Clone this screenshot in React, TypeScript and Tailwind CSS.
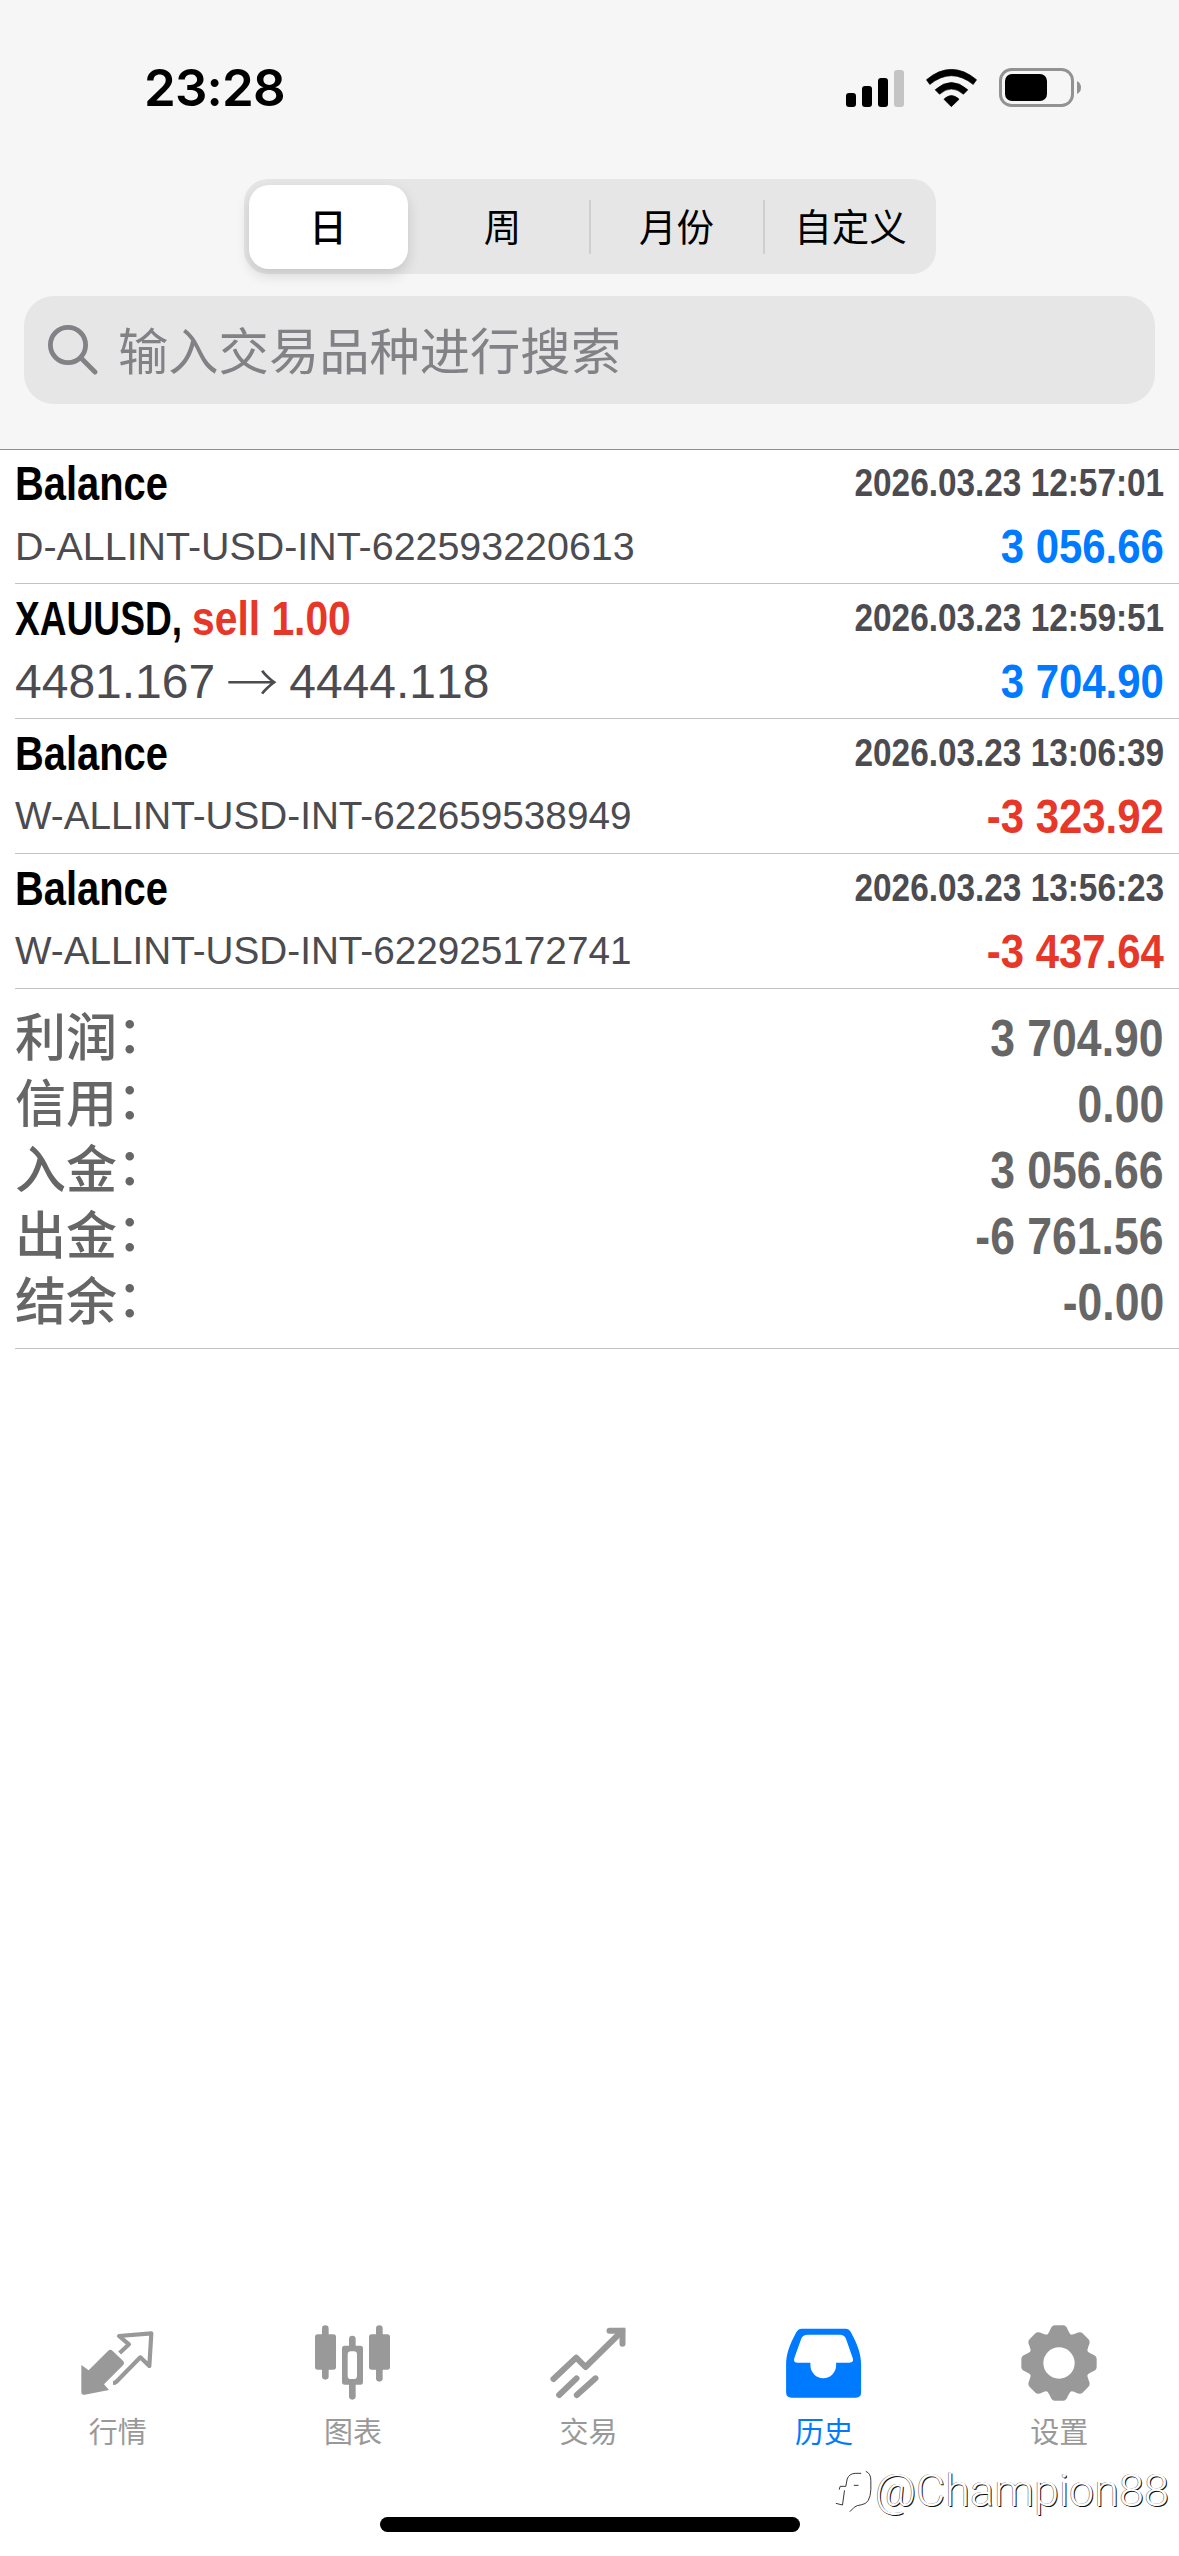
import { useState } from "react";

const BLUE = "text-[#007aff]";
const RED = "text-[#e73728]";

const PERIODS = ["日", "周", "月份", "自定义"];

interface Deal {
  title: string;
  side?: string;
  time: string;
  note?: string;
  noteSize?: string;
  prices?: [string, string];
  amount: string;
}

const DEALS: Deal[] = [
  {
    title: "Balance",
    time: "2026.03.23 12:57:01",
    note: "D-ALLINT-USD-INT-622593220613",
    noteSize: "text-[39.4px]",
    amount: "3 056.66",
  },
  {
    title: "XAUUSD,",
    side: "sell 1.00",
    time: "2026.03.23 12:59:51",
    prices: ["4481.167", "4444.118"],
    amount: "3 704.90",
  },
  {
    title: "Balance",
    time: "2026.03.23 13:06:39",
    note: "W-ALLINT-USD-INT-622659538949",
    noteSize: "text-[38.7px]",
    amount: "-3 323.92",
  },
  {
    title: "Balance",
    time: "2026.03.23 13:56:23",
    note: "W-ALLINT-USD-INT-622925172741",
    noteSize: "text-[38.7px]",
    amount: "-3 437.64",
  },
];

const SUMMARY = [
  { label: "利润", value: "3 704.90" },
  { label: "信用", value: "0.00" },
  { label: "入金", value: "3 056.66" },
  { label: "出金", value: "-6 761.56" },
  { label: "结余", value: "-0.00" },
];

const StatusBar = () => (
  <div className="flex h-[179px] items-start justify-between pl-[144px] pr-[98px] pt-[57px]">
    <span className="font-['Inter'] text-[51px] font-semibold leading-[62px] tracking-[-0.8px] text-black">23:28</span>
    <div className="flex items-center gap-[22px] pt-[11px]">
      <svg className="h-[38px] w-[58px]" viewBox="0 0 58 38">
        <rect x="0" y="24" width="10" height="14" rx="3" />
        <rect x="16" y="17" width="10" height="21" rx="3" />
        <rect x="32" y="9" width="10" height="29" rx="3" />
        <rect x="48" y="1" width="10" height="37" rx="3" fill="#c4c4c4" />
      </svg>
      <svg className="h-[38px] w-[51px]" viewBox="319 56 151 113">
        <path d="M320 88Q394 26 469 88L459 102Q394 50 330 102Z" stroke="#000" strokeWidth="2" strokeLinejoin="round" />
        <path d="M346 118Q394 74 443 118L430 131Q394 100 359 131Z" stroke="#000" strokeWidth="2" strokeLinejoin="round" />
        <path d="M372 146Q394 124 417 146L394 168Z" stroke="#000" strokeWidth="2" strokeLinejoin="round" />
      </svg>
      <svg className="h-[39px] w-[82px]" viewBox="0 0 82 39">
        <rect x="1.5" y="1.5" width="72" height="36" rx="11" fill="none" stroke="#929292" strokeWidth="3" />
        <rect x="6" y="6" width="42" height="27" rx="7" />
        <path d="M78 13q4 2 4 6.500t-4 6.500z" fill="#929292" />
      </svg>
    </div>
  </div>
);

const Header = () => {
  const [active, setActive] = useState(0);

  return (
    <header className="h-[450px] border-b border-[#8f8f91] bg-[#f6f6f6]">
      <StatusBar />
      <div className="mx-auto flex h-[95px] w-[692px] items-center rounded-[24px] bg-[#e6e6e7] pl-[5px]">
        {PERIODS.map((period, i) => (
          <div key={period} className="flex items-center">
            {i > 0 && <span className={`h-[54px] w-[2px] ${i > active + 1 ? "bg-[#cfcfd1]" : ""}`} />}
            <button
              onClick={() => setActive(i)}
              className={`flex items-center justify-center pt-[5px] text-[37.5px] leading-none text-black ${
                i === active
                  ? "mr-[7px] h-[84px] w-[159px] rounded-[20px] bg-white font-medium shadow-[0_6px_14px_rgba(0,0,0,0.14)]"
                  : "h-[84px] w-[172px]"
              }`}
            >
              {period}
            </button>
          </div>
        ))}
      </div>
      <div className="mx-6 mt-[22px] flex h-[108px] items-center rounded-[30px] bg-[#e6e6e7] pl-6 text-[#828286]">
        <svg className="h-[50px] w-[50px]" viewBox="0 0 50 50" fill="none" stroke="currentColor" strokeWidth="4.800" strokeLinecap="round">
          <circle cx="20" cy="20" r="17.600" />
          <path d="M33 33L47 47" />
        </svg>
        <span className="ml-[20px] pt-[7px] text-[50.3px] leading-none">输入交易品种进行搜索</span>
      </div>
    </header>
  );
};

const DealTitle = ({ deal }: { deal: Deal }) => (
  <div className="flex whitespace-pre text-[48px] font-bold leading-[64px] text-black">
    {deal.side ? (
      <>
        <span className="-mr-[52px] origin-left scale-x-[0.773]">{deal.title} </span>
        <span className={`origin-left scale-x-[0.85] ${RED}`}>{deal.side}</span>
      </>
    ) : (
      <span className="origin-left scale-x-[0.83]">{deal.title}</span>
    )}
  </div>
);

const DealRow = ({ deal }: { deal: Deal }) => {
  const amountColor = deal.amount.startsWith("-") ? RED : BLUE;

  return (
    <li className="ml-[15px] h-[135px] border-b border-[#c3c3c5] pr-[15px] pt-[3px]">
      <div className="flex h-[64px] items-start justify-between">
        <DealTitle deal={deal} />
        <span className="origin-right scale-x-[0.855] whitespace-nowrap text-[39px] font-bold leading-[62px] text-[#4b4b50]">
          {deal.time}
        </span>
      </div>
      <div className="flex items-start justify-between whitespace-nowrap text-[#4b4b50]">
        {deal.prices ? (
          <span className="flex text-[48px] leading-[61px] [font-kerning:none]">
            {deal.prices[0]}
            <span className="mx-[11px] -mt-[2px] font-['Noto_Sans_CJK_SC'] text-[52px] font-light">→</span>
            {deal.prices[1]}
          </span>
        ) : (
          <span className={`leading-[60px] ${deal.noteSize}`}>{deal.note}</span>
        )}
        <span className={`origin-right scale-x-[0.873] text-[48px] font-bold leading-[62px] ${amountColor}`}>
          {deal.amount}
        </span>
      </div>
    </li>
  );
};

const Summary = () => (
  <dl className="ml-[15px] h-[360px] border-b border-[#c3c3c5] pr-[15px] pt-[17px] text-[51px] text-[#666]">
    {SUMMARY.map(({ label, value }) => (
      <div key={label} className="flex h-[66px] justify-between">
        <dt className="font-medium leading-[66px]">
          {label}
          <span className="inline-block -translate-y-[3px]">：</span>
        </dt>
        <dd className="origin-right scale-x-[0.873] font-bold leading-[66px]">{value}</dd>
      </div>
    ))}
  </dl>
);

const QuotesIcon = () => (
  <svg className="size-[76px] overflow-visible" viewBox="119 76 228 228">
    <path d="M123 196L145 212L203 154Q210 147 217 154L248 183Q254 190 248 197L191 254L206 271L133 285Q123 287 123 277Z" fill="currentColor" />
    <path d="M238 160L266 134L236 109L333 101L327 199L300 173L228 246Q224 250 218 250" fill="none" stroke="currentColor" strokeWidth="12.500" strokeLinejoin="round" />
  </svg>
);

const ChartIcon = () => (
  <svg className="size-[76px] overflow-visible" viewBox="825 76 228 228" fill="currentColor">
    <rect x="846" y="77" width="20" height="163" rx="10" />
    <rect x="825" y="104" width="63" height="106" rx="8" />
    <rect x="1008" y="77" width="20" height="169" rx="10" />
    <rect x="987" y="104" width="63" height="106" rx="8" />
    <rect x="927" y="108" width="20" height="192" rx="10" />
    <rect x="906" y="138" width="63" height="117" rx="8" />
    <rect x="923" y="155" width="28" height="83" rx="10" fill="#fff" />
  </svg>
);

const TradeIcon = () => (
  <svg className="size-[76px] overflow-visible" viewBox="151.500 76 228 228" fill="none" stroke="currentColor" strokeWidth="18" strokeLinecap="round" strokeLinejoin="round">
    <path d="M162 238L230 174L258 202L368 94" />
    <path d="M330 93H369V132" strokeLinejoin="miter" />
    <path d="M179 286L231 236" />
    <path d="M232 286L288 236" />
  </svg>
);

const HistoryIcon = () => (
  <svg className="size-[76px] overflow-visible" viewBox="857.700 76 228 228">
    <path
      fill="currentColor"
      fillRule="evenodd"
      d="M905 87H1036Q1047 87 1052 97C1073 135 1083 165 1083 195V278Q1083 294 1067 294H874Q858 294 858 278V195C858 165 868 135 889 97Q895 87 905 87ZM922 105Q909 105 904 116L883 174Q878 189 893 189H931V197A38.500 39 0 0 0 1008 197V189H1048Q1062 189 1058 176L1037 116Q1032 105 1020 105Z"
    />
  </svg>
);

const SettingsIcon = () => (
  <svg className="size-[76px] overflow-visible" viewBox="-114 -114 228 228" fill="currentColor">
    <circle r="90" />
    {[0, 45, 90, 135, 180, 225, 270, 315].map((deg) => (
      <path key={deg} transform={`rotate(${deg})`} d="M-42 -80Q-31 -86 -27 -98Q-22 -113 -12 -113H12Q22 -113 27 -98Q31 -86 42 -80Z" />
    ))}
    <circle r="47" fill="#fff" />
  </svg>
);

const TABS = [
  { label: "行情", icon: QuotesIcon },
  { label: "图表", icon: ChartIcon },
  { label: "交易", icon: TradeIcon },
  { label: "历史", icon: HistoryIcon, active: true },
  { label: "设置", icon: SettingsIcon },
];

const TabBar = () => (
  <nav className="grid h-[231px] w-[1177px] grid-cols-5">
    {TABS.map(({ label, icon: Icon, active }) => (
      <div key={label} className={`flex flex-col items-center ${active ? BLUE : "text-[#999]"}`}>
        <Icon />
        <span className="mt-[15px] text-[29px] leading-[34px]">{label}</span>
      </div>
    ))}
  </nav>
);

const Watermark = () => (
  <div className="absolute bottom-[38px] right-[10px] flex items-center text-white">
    <svg className="h-[42px] w-[37px]" viewBox="48 45 110 126" fill="none" stroke="#111" strokeWidth="2.500">
      <path d="M60 104L63 94H80L84 72Q90 56 108 55H126M140 49Q155 55 155 76V104Q153 146 128 149Q112 151 105 157L92 170" />
      <path d="M76 106L70 150L50 145M104 91H118" />
    </svg>
    <span className="ml-[3px] font-['Roboto'] text-[45px] font-light leading-[54px] [text-shadow:1px_1px_0.5px_#111,-0.5px_-0.5px_0.5px_#555]">@Champion88</span>
  </div>
);

export default function App() {
  return (
    <div className="relative flex h-[2556px] w-[1179px] flex-col overflow-hidden bg-white font-['Liberation_Sans','Noto_Sans_CJK_SC',sans-serif]">
      <Header />
      <main className="-mt-px flex-1">
        <ul>
          {DEALS.map((deal) => (
            <DealRow key={deal.time} deal={deal} />
          ))}
        </ul>
        <Summary />
      </main>
      <TabBar />
      <div className="absolute bottom-[24px] left-[380px] h-[15px] w-[420px] rounded-full bg-black" />
      <Watermark />
    </div>
  );
}
